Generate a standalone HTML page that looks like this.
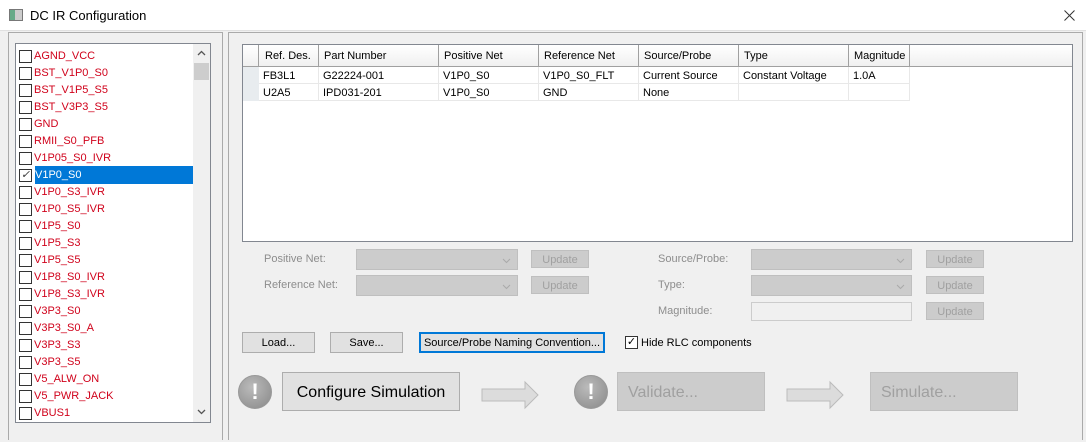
<!DOCTYPE html>
<html><head><meta charset="utf-8"><style>
*{box-sizing:border-box;margin:0;padding:0}
body{width:1086px;height:442px;background:#f0f0f0;font-family:"Liberation Sans",sans-serif;font-size:11px;color:#000;position:relative;overflow:hidden}
.a{position:absolute}
.title{left:0;top:0;width:1086px;height:31px;background:#fff;border-bottom:1px solid #e0e0e0}
.grp{border:1px solid #aaa}
.li{position:absolute;left:2px;height:17px;width:176px;color:#d0021b;font-size:11px;line-height:18px;padding-left:16px}
.li i{position:absolute;left:1px;top:3px;width:13px;height:13px;border:1px solid #333;background:#fff}
.btn{position:absolute;background:#e1e1e1;border:1px solid #adadad;text-align:center;font-size:11px}
.dis{background:#ccc;border:1px solid #bfbfbf;color:#a0a0a0}
.lab{position:absolute;color:#8d8d8d;font-size:11px}
.hd{position:absolute;top:0;height:21px;line-height:22px;border-right:1px solid #a0a0a0;padding-left:5px}
.c{position:absolute;height:17px;line-height:18px;border-right:1px solid #e8e8e8;border-bottom:1px solid #e8e8e8;padding-left:4px;background:#fff}
.circ{position:absolute;width:34px;height:34px;border-radius:50%;background:radial-gradient(circle at 40% 35%,#bbb,#888);border:1px solid #999;color:#fff;font-weight:bold;font-size:22px;text-align:center;line-height:32px}
</style></head><body>
<div class="a title">
 <div class="a" style="left:9px;top:9px;width:14px;height:12px;border:1px solid #777;background:linear-gradient(90deg,#6a8 0 40%,#ccc 40%)"></div>
 <div class="a" style="left:30px;top:8px;font-size:13px">DC IR Configuration</div>
 <svg class="a" style="left:1064px;top:10px" width="11" height="11"><path d="M0.5 0.5L10.5 10.5M10.5 0.5L0.5 10.5" stroke="#333" stroke-width="1"/></svg>
</div>
<div class="a grp" style="left:8px;top:32px;width:215px;height:408px;border-bottom:none"></div>
<div class="a" style="left:15px;top:43px;width:196px;height:380px;background:#fff;border:1px solid #828790">
 <div class="li" style="top:3px"><i></i>AGND_VCC</div>
 <div class="li" style="top:20px"><i></i>BST_V1P0_S0</div>
 <div class="li" style="top:37px"><i></i>BST_V1P5_S5</div>
 <div class="li" style="top:54px"><i></i>BST_V3P3_S5</div>
 <div class="li" style="top:71px"><i></i>GND</div>
 <div class="li" style="top:88px"><i></i>RMII_S0_PFB</div>
 <div class="li" style="top:105px"><i></i>V1P05_S0_IVR</div>
 <div class="li" style="top:122px;color:#fff"><i style="font-size:11px;line-height:11px;color:#333;text-align:center">✓</i><span style="display:block;background:#0078d7;margin-left:1px;padding-left:0">V1P0_S0</span></div>
 <div class="li" style="top:139px"><i></i>V1P0_S3_IVR</div>
 <div class="li" style="top:156px"><i></i>V1P0_S5_IVR</div>
 <div class="li" style="top:173px"><i></i>V1P5_S0</div>
 <div class="li" style="top:190px"><i></i>V1P5_S3</div>
 <div class="li" style="top:207px"><i></i>V1P5_S5</div>
 <div class="li" style="top:224px"><i></i>V1P8_S0_IVR</div>
 <div class="li" style="top:241px"><i></i>V1P8_S3_IVR</div>
 <div class="li" style="top:258px"><i></i>V3P3_S0</div>
 <div class="li" style="top:275px"><i></i>V3P3_S0_A</div>
 <div class="li" style="top:292px"><i></i>V3P3_S3</div>
 <div class="li" style="top:309px"><i></i>V3P3_S5</div>
 <div class="li" style="top:326px"><i></i>V5_ALW_ON</div>
 <div class="li" style="top:343px"><i></i>V5_PWR_JACK</div>
 <div class="li" style="top:360px"><i></i>VBUS1</div>
 <div class="a" style="left:177px;top:0;width:17px;height:378px;background:#f0f0f0">
  <svg class="a" style="left:4px;top:6px" width="9" height="6"><path d="M1 5L4.5 1.5L8 5" stroke="#555" fill="none" stroke-width="1.3"/></svg>
  <div class="a" style="left:1px;top:19px;width:15px;height:17px;background:#cdcdcd"></div>
  <svg class="a" style="left:4px;top:365px" width="9" height="6"><path d="M1 1L4.5 4.5L8 1" stroke="#555" fill="none" stroke-width="1.3"/></svg>
 </div>
</div>
<div class="a grp" style="left:228px;top:32px;width:855px;height:408px;border-bottom:none"></div>
<div class="a" style="left:242px;top:44px;width:831px;height:198px;background:#fff;border:1px solid #828790">
 <div class="a" style="left:0;top:0;width:829px;height:22px;background:linear-gradient(#fff,#f0f0f0);border-bottom:1px solid #a0a0a0"></div>
 <div class="hd" style="left:0;width:16px;padding:0"></div>
 <div class="hd" style="left:16px;width:60px;padding-left:6px">Ref. Des.</div>
 <div class="hd" style="left:76px;width:120px">Part Number</div>
 <div class="hd" style="left:196px;width:100px">Positive Net</div>
 <div class="hd" style="left:296px;width:100px">Reference Net</div>
 <div class="hd" style="left:396px;width:100px">Source/Probe</div>
 <div class="hd" style="left:496px;width:110px">Type</div>
 <div class="hd" style="left:606px;width:61px">Magnitude</div>
 <div class="a" style="left:0;top:22px;width:16px;height:34px;background:#e8ecef"></div>
 <div class="c" style="left:16px;top:22px;width:60px">FB3L1</div>
 <div class="c" style="left:76px;top:22px;width:120px">G22224-001</div>
 <div class="c" style="left:196px;top:22px;width:100px">V1P0_S0</div>
 <div class="c" style="left:296px;top:22px;width:100px">V1P0_S0_FLT</div>
 <div class="c" style="left:396px;top:22px;width:100px">Current Source</div>
 <div class="c" style="left:496px;top:22px;width:110px">Constant Voltage</div>
 <div class="c" style="left:606px;top:22px;width:61px">1.0A</div>
 <div class="c" style="left:16px;top:39px;width:60px">U2A5</div>
 <div class="c" style="left:76px;top:39px;width:120px">IPD031-201</div>
 <div class="c" style="left:196px;top:39px;width:100px">V1P0_S0</div>
 <div class="c" style="left:296px;top:39px;width:100px">GND</div>
 <div class="c" style="left:396px;top:39px;width:100px">None</div>
 <div class="c" style="left:496px;top:39px;width:110px"></div>
 <div class="c" style="left:606px;top:39px;width:61px"></div>
</div>
<div class="lab" style="left:264px;top:253px">Positive Net:</div>
<div class="lab" style="left:264px;top:279px">Reference Net:</div>
<div class="lab" style="left:658px;top:253px">Source/Probe:</div>
<div class="lab" style="left:658px;top:279px">Type:</div>
<div class="lab" style="left:658px;top:305px">Magnitude:</div>
<div class="a dis" style="left:356px;top:249px;width:162px;height:21px"><svg class="a" style="left:145px;top:8px" width="9" height="6"><path d="M1 1L4.5 4.5L8 1" stroke="#aaa" fill="none"/></svg></div>
<div class="a dis" style="left:356px;top:275px;width:162px;height:21px"><svg class="a" style="left:145px;top:8px" width="9" height="6"><path d="M1 1L4.5 4.5L8 1" stroke="#aaa" fill="none"/></svg></div>
<div class="a dis" style="left:751px;top:249px;width:161px;height:21px"><svg class="a" style="left:144px;top:8px" width="9" height="6"><path d="M1 1L4.5 4.5L8 1" stroke="#aaa" fill="none"/></svg></div>
<div class="a dis" style="left:751px;top:275px;width:161px;height:21px"><svg class="a" style="left:144px;top:8px" width="9" height="6"><path d="M1 1L4.5 4.5L8 1" stroke="#aaa" fill="none"/></svg></div>
<div class="a" style="left:751px;top:302px;width:161px;height:19px;background:#f0f0f0;border:1px solid #ccc"></div>
<div class="btn dis" style="left:531px;top:250px;width:58px;height:18px;line-height:18px">Update</div>
<div class="btn dis" style="left:531px;top:276px;width:58px;height:18px;line-height:18px">Update</div>
<div class="btn dis" style="left:926px;top:250px;width:58px;height:18px;line-height:18px">Update</div>
<div class="btn dis" style="left:926px;top:276px;width:58px;height:18px;line-height:18px">Update</div>
<div class="btn dis" style="left:926px;top:302px;width:58px;height:18px;line-height:18px">Update</div>
<div class="btn" style="left:242px;top:332px;width:73px;height:21px;line-height:21px">Load...</div>
<div class="btn" style="left:330px;top:332px;width:73px;height:21px;line-height:21px">Save...</div>
<div class="btn" style="left:419px;top:332px;width:186px;height:21px;line-height:19px;border:2px solid #0078d7">Source/Probe Naming Convention...</div>
<div class="a" style="left:625px;top:336px;width:13px;height:13px;border:1px solid #333;background:#fff;font-size:11px;line-height:11px;text-align:center">✓</div>
<div class="a" style="left:641px;top:337px">Hide RLC components</div>
<div class="circ" style="left:238px;top:375px">!</div>
<div class="btn" style="left:282px;top:372px;width:178px;height:39px;line-height:40px;font-size:16px">Configure Simulation</div>
<svg class="a" style="left:480px;top:380px" width="62" height="32"><path d="M2 9 H45 V2 L58 15 L45 28 V21 H2 Z" fill="#dcdcdc" stroke="#bbb"/></svg>
<div class="circ" style="left:574px;top:375px">!</div>
<div class="btn dis" style="left:617px;top:372px;width:148px;height:39px;line-height:40px;font-size:16px;text-align:left;padding-left:10px">Validate...</div>
<svg class="a" style="left:785px;top:380px" width="62" height="32"><path d="M2 9 H45 V2 L58 15 L45 28 V21 H2 Z" fill="#dcdcdc" stroke="#bbb"/></svg>
<div class="btn dis" style="left:870px;top:372px;width:148px;height:39px;line-height:40px;font-size:16px;text-align:left;padding-left:10px">Simulate...</div>
</body></html>
